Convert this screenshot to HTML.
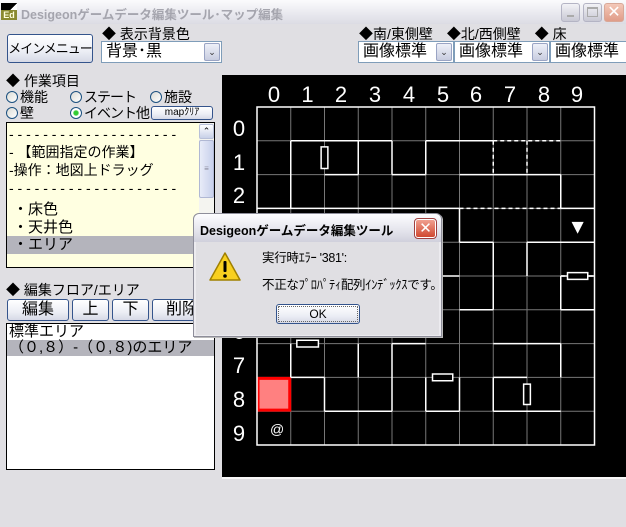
<!DOCTYPE html>
<html><head><meta charset="utf-8">
<style>
*{margin:0;padding:0;box-sizing:border-box}
body{width:626px;height:527px;background:#e0dfe3;position:relative;overflow:hidden;font-family:"Liberation Sans","Noto Sans CJK JP","IPAGothic",sans-serif;font-size:14px;color:#000}
.a{position:absolute;white-space:nowrap}
.title{left:0;top:0;width:626px;height:24px;background:linear-gradient(#fbfbfd,#e8e8ee 60%,#dcdce4);}
.btn{background:linear-gradient(#fff,#eceef5 60%,#d6d9e6);border:1px solid #34548c;border-radius:3px;text-align:center}
.combo{background:#fff;border:1px solid #7f9db9;height:22px;font-size:16px;line-height:20px;padding-left:4px}
.dd{position:absolute;right:1px;top:1px;width:16px;height:18px;background:linear-gradient(#eef0f8,#c8cde0);border:1px solid #9aa4c4;border-radius:2px;font-size:9px;line-height:16px;text-align:center;color:#333}
.radio{display:inline-block;width:12px;height:12px;border:1px solid #1c5180;border-radius:50%;background:linear-gradient(135deg,#dcdcd6,#fff);vertical-align:-1px;margin-right:2px}
</style></head><body>
<div class="a title"></div>
<div class="a" style="left:1px;top:3px;width:16px;height:16px;background:linear-gradient(135deg,#000 50%,#fff 50%)"></div>
<div class="a" style="left:1px;top:10px;width:16px;height:10px;background:#8a8a30;color:#ffd;font-size:9px;font-weight:bold;line-height:10px;text-align:center">Ed</div>
<div class="a" style="left:21px;top:4px;font-size:12.5px;font-weight:bold;color:#a5a5ae">Desigeonゲームデータ編集ツール･マップ編集</div>
<div class="a" style="left:561px;top:3px;width:19px;height:19px;border-radius:3px;background:linear-gradient(#f2f2f6,#c8c8d4);border:1px solid #b4b4c4"><div class="a" style="left:5px;top:11px;width:7px;height:2px;background:#aaa"></div></div>
<div class="a" style="left:583px;top:3px;width:19px;height:19px;border-radius:3px;background:linear-gradient(#f2f2f6,#c8c8d4);border:1px solid #b4b4c4"><div class="a" style="left:3px;top:3px;width:11px;height:10px;border:1px solid #aaa;border-top-width:2px"></div></div>
<div class="a" style="left:604px;top:3px;width:20px;height:19px;border-radius:3px;background:linear-gradient(#f4c8b8,#e09c88);border:1px solid #d8a898;color:#fff;font-size:16px;line-height:17px;text-align:center">✕</div>

<div class="a btn" style="left:7px;top:34px;width:86px;height:29px;line-height:27px;font-size:13px;letter-spacing:-1px">メインメニュー</div>
<div class="a" style="left:102px;top:24px;font-size:14px">◆ 表示背景色</div>
<div class="a combo" style="left:101px;top:41px;width:121px">背景･黒<div class="dd">⌄</div></div>

<div class="a" style="left:359px;top:24px;font-size:14px">◆南/東側壁　◆北/西側壁　◆ 床</div>
<div class="a combo" style="left:358px;top:41px;width:96px">画像標準<div class="dd">⌄</div></div>
<div class="a combo" style="left:454px;top:41px;width:96px">画像標準<div class="dd">⌄</div></div>
<div class="a combo" style="left:550px;top:41px;width:80px">画像標準</div>

<div class="a" style="left:6px;top:71px;font-size:14px">◆ 作業項目</div>
<div class="a" style="left:6px;top:89px;font-size:14px;line-height:16px"><span class="radio"></span>機能</div>
<div class="a" style="left:70px;top:89px;font-size:14px;line-height:16px;letter-spacing:-1px"><span class="radio"></span>ステート</div>
<div class="a" style="left:150px;top:89px;font-size:14px;line-height:16px"><span class="radio"></span>施設</div>
<div class="a" style="left:6px;top:105px;font-size:14px;line-height:16px"><span class="radio"></span>壁</div>
<div class="a" style="left:70px;top:105px;font-size:14px;line-height:16px;letter-spacing:-1px"><span class="radio" style="background:radial-gradient(#3c3 30%,#fff 45%)"></span>イベント他</div>
<div class="a btn" style="left:151px;top:106px;width:62px;height:14px;font-size:10px;line-height:12px">mapｸﾘｱ</div>

<div class="a" style="left:6px;top:122px;width:209px;height:146px;background:#ffffe1;border:1px solid #000;overflow:hidden">
 <div class="a" style="left:2px;top:2px;font-size:14px;line-height:18px">- - - - - - - - - - - - - - - - - - - -<br>- 【範囲指定の作業】<br>-操作：地図上ドラッグ<br>- - - - - - - - - - - - - - - - - - - -</div>
 <div class="a" style="left:0;top:78px;width:192px;font-size:15px;line-height:17.5px;padding-left:6px">・床色<br>・天井色<br><div style="background:#b4b4bc;margin-left:-6px;padding-left:6px">・エリア</div></div>
 <div class="a" style="left:192px;top:0;width:16px;height:144px;background:#f4f4f0"></div>
 <div class="a" style="left:192px;top:1px;width:15px;height:15px;background:linear-gradient(#fff,#c8d0e8);border:1px solid #b8c0d8;border-radius:2px;font-size:9px;text-align:center;line-height:13px">⌃</div>
 <div class="a" style="left:192px;top:17px;width:15px;height:58px;background:linear-gradient(90deg,#e8ecf8,#c8d0ec);border:1px solid #b0b8d4;border-radius:2px;font-size:8px;text-align:center;line-height:56px;color:#889">≡</div>
</div>

<div class="a" style="left:6px;top:280px;font-size:14px">◆ 編集フロア/エリア</div>
<div class="a btn" style="left:7px;top:299px;width:62px;height:22px;font-size:16px;line-height:20px">編集</div>
<div class="a btn" style="left:72px;top:299px;width:37px;height:22px;font-size:16px;line-height:20px">上</div>
<div class="a btn" style="left:112px;top:299px;width:37px;height:22px;font-size:16px;line-height:20px">下</div>
<div class="a btn" style="left:152px;top:299px;width:60px;height:22px;font-size:16px;line-height:20px">削除</div>
<div class="a" style="left:6px;top:323px;width:209px;height:147px;background:#fff;border:1px solid #000">
 <div style="font-size:15px;line-height:16px;padding-left:2px">標準エリア</div>
 <div style="font-size:15px;line-height:16px;background:#b4b4bc;padding-left:2px">（０,８）-（０,８)のエリア</div>
</div>

<svg class="a" style="left:222px;top:75px" width="404" height="404" viewBox="0 0 404 404">
<rect x="0" y="0" width="404" height="402" fill="#000"/>
<line x1="0" y1="403" x2="404" y2="403" stroke="#fff" stroke-width="1.5"/>
<g font-family="Liberation Sans" font-size="22" fill="#fff" text-anchor="middle">
<text x="52" y="27">0</text><text x="85.5" y="27">1</text><text x="119" y="27">2</text><text x="153" y="27">3</text><text x="187" y="27">4</text><text x="221" y="27">5</text><text x="254" y="27">6</text><text x="288" y="27">7</text><text x="322" y="27">8</text><text x="355" y="27">9</text>
<text x="17" y="61">0</text><text x="17" y="95">1</text><text x="17" y="128">2</text><text x="17" y="162">3</text><text x="17" y="196">4</text><text x="17" y="230">5</text><text x="17" y="264">6</text><text x="17" y="298">7</text><text x="17" y="332">8</text><text x="17" y="366">9</text>
</g>
<g transform="translate(35,32) scale(33.75,33.8)">
<g stroke="#777" stroke-width="1" vector-effect="non-scaling-stroke" fill="none">
<path vector-effect="non-scaling-stroke" d="M1 0V10M2 0V10M3 0V10M4 0V10M5 0V10M6 0V10M7 0V10M8 0V10M9 0V10M0 1H10M0 2H10M0 3H10M0 4H10M0 5H10M0 6H10M0 7H10M0 8H10M0 9H10"/>
</g>
<rect x="0" y="8" width="1" height="1" fill="#ff8080"/>
<rect x="0.03" y="8.03" width="0.94" height="0.94" fill="none" stroke="#f00" stroke-width="3" vector-effect="non-scaling-stroke"/>
<g stroke="#fff" fill="none">
<rect x="0" y="0" width="10" height="10" stroke-width="1.5" vector-effect="non-scaling-stroke"/>
<path stroke-width="1.5" vector-effect="non-scaling-stroke" d="M1 1H4M5 1H7M1 1V3M3 1V2M4 1V2M5 1V2M2 2H3M4 2H5M6 2H9M9 2V3M0 3H6M9 3H10M6 3V4M6 4H7M8 4H10M7 4V6M8 4V5M9 5V6M5 5H6M9 5H10M6 6H7M9 6H10M4 7H5M7 7H9M1 7V8M4 7V9M9 7V8M3 7V8M1 8H2M7 8H8M2 8V9M5 8V9M6 8V9M7 8V9M2 9H4M5 9H6M7 9H9"/>
<path stroke-width="1.5" stroke-dasharray="4 3" vector-effect="non-scaling-stroke" d="M7 1H9M7 1V2M8 1V2M6 3H9M9 5H9.99"/>
</g>
<g fill="#000" stroke="#fff" stroke-width="1.5">
<rect x="1.9" y="1.18" width="0.2" height="0.64" vector-effect="non-scaling-stroke"/>
<rect x="1.18" y="6.9" width="0.64" height="0.2" vector-effect="non-scaling-stroke"/>
<rect x="5.2" y="7.9" width="0.6" height="0.2" vector-effect="non-scaling-stroke"/>
<rect x="9.2" y="4.9" width="0.6" height="0.2" vector-effect="non-scaling-stroke"/>
<rect x="7.9" y="8.2" width="0.2" height="0.6" vector-effect="non-scaling-stroke"/>
</g>
<path d="M9.32 3.4H9.68L9.5 3.75Z" fill="#fff"/>
</g>
<text x="48" y="359" font-family="Liberation Sans" font-size="14" fill="#fff">@</text>
</svg>

<div class="a" style="left:193px;top:213px;width:249px;height:124px;background:#ecebef;border:1px solid #8e8e9a;border-radius:6px 6px 0 0;box-shadow:1px 1px 0 #bbb">
 <div class="a" style="left:0;top:0;width:247px;height:28px;border-radius:6px 6px 0 0;background:linear-gradient(#fdfdff,#e4e4ec 60%,#d0d0dc)"></div>
 <div class="a" style="left:6px;top:6px;font-size:12.5px;font-weight:bold;color:#000">Desigeonゲームデータ編集ツール</div>
 <div class="a" style="left:221px;top:5px;width:21px;height:19px;background:linear-gradient(#f0a090,#d04830);border:1px solid #fff;border-radius:3px;color:#fff;text-align:center;font-size:15px;line-height:17px;outline:1px solid #a04040">✕</div>
 <div class="a" style="left:2px;top:28px;width:243px;height:93px;background:#e0dfe3"></div>
 <svg class="a" style="left:14px;top:37px" width="34" height="32" viewBox="0 0 34 32"><path d="M17 2L32 29H2Z" fill="#f8d020" stroke="#a08000" stroke-width="1.5" stroke-linejoin="round"/><rect x="15.5" y="10" width="3" height="11" rx="1" fill="#000"/><circle cx="17" cy="25" r="1.8" fill="#000"/></svg>
 <div class="a" style="left:68px;top:33px;font-size:12.5px;letter-spacing:-0.3px">実行時ｴﾗｰ '381':</div>
 <div class="a" style="left:68px;top:60px;font-size:12.5px;letter-spacing:-0.3px">不正なﾌﾟﾛﾊﾟﾃｨ配列ｲﾝﾃﾞｯｸｽです。</div>
 <div class="a btn" style="left:82px;top:90px;width:84px;height:20px;font-size:12px;line-height:18px;outline:1px dotted #666;outline-offset:-3px">OK</div>
</div>
</body></html>
